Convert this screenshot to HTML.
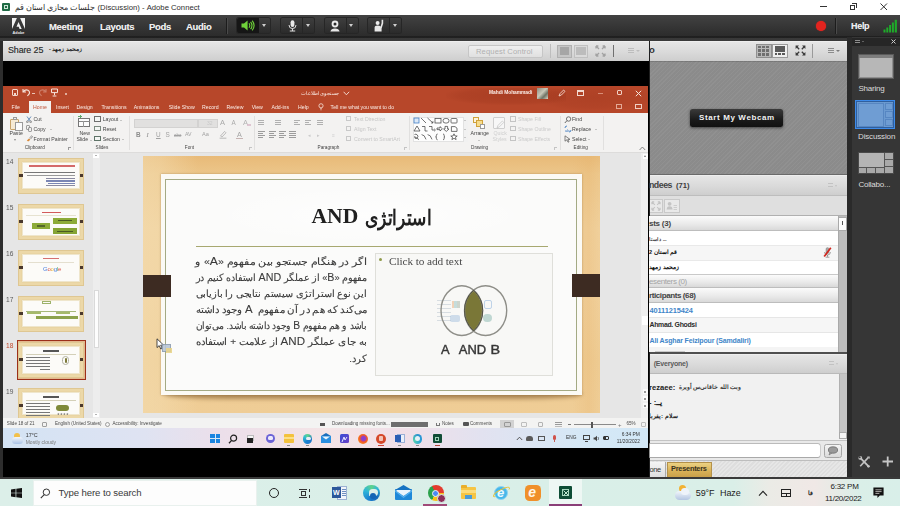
<!DOCTYPE html>
<html>
<head>
<meta charset="utf-8">
<title>Adobe Connect</title>
<style>
*{box-sizing:border-box;margin:0;padding:0}
html,body{width:900px;height:506px;overflow:hidden;background:#2e2e2e;font-family:"Liberation Sans",sans-serif;}
.a{position:absolute}
.t{position:absolute;white-space:nowrap;line-height:1}
#root{position:relative;width:900px;height:506px;overflow:hidden;background:#2d2d2d}
/* title bar */
#titlebar{left:0;top:0;width:900px;height:15px;background:#fff}
/* menu */
#menubar{left:0;top:15px;width:900px;height:21px;background:linear-gradient(#424242,#303030 80%,#2c2c2c)}
#menugap{left:0;top:36px;width:900px;height:5px;background:linear-gradient(#1f1f1f 0,#212121 38%,#383838 45%,#3a3a3a 100%)}
.menu{color:#efefef;font-weight:bold;font-size:9.5px;top:21.6px;letter-spacing:-0.3px;text-shadow:0 0 .6px #888}
.mbtn{top:18px;height:15px;background:linear-gradient(#3e3e3e,#2b2b2b);border-radius:2px;box-shadow:0 0 0 1px #262626}
.arr{width:0;height:0;border-left:2.5px solid transparent;border-right:2.5px solid transparent;border-top:3px solid #cfcfcf}
/* pods */
.podhead{background:linear-gradient(#f3f3f3 0,#e5e5e5 7%,#dadada 55%,#cecece 100%);}
/* powerpoint */
.pp{font-size:5.2px;color:#444;filter:blur(.2px)}
.ppw{font-size:5.2px;color:#fbeee8;filter:blur(.2px)}
.ppd{font-size:5.2px;color:#b9b9b9;filter:blur(.3px)}
.sep{width:1px;background:#e1e0df;top:116px;height:34px}
.ic{border:1px solid #8a8a8a;border-radius:1px;opacity:.8}
.ar{direction:rtl;font-size:11px;color:#2f2f2f;width:173px;left:195px;height:16px;line-height:16px;text-align:justify;text-align-last:justify;white-space:nowrap;position:absolute}
.thumb{left:18px;width:66px;height:36px;background:#ecd8a8;border:1px solid #dfc792}
.thumb i{position:absolute;left:3.4px;top:3.4px;right:3.4px;bottom:3.4px;background:#fcfbf8;border:1px solid #efe6cc;box-shadow:0 0 1px #d9c48e}
.thumb b{position:absolute;top:15px;width:3.5px;height:3.2px;background:#4a382c}
.tn{font-size:6.6px;color:#5a5a5a;left:5.5px;filter:blur(.25px)}
.row{left:649px;width:189px;height:15px}
.rt{font-size:7.4px;font-weight:bold;letter-spacing:-.1px}
.ghead{left:649px;width:189px;background:linear-gradient(#fbfbfb,#e9e9e9 60%,#d9d9d9);border-bottom:1px solid #bdbdbd}
.tb{font-size:9px;color:#222}
</style>
</head>
<body>
<div id="root">

<!-- ===== window title bar ===== -->
<div id="titlebar" class="a">
  <div class="a" style="left:2px;top:3px;width:8px;height:8px;background:#1f6b45;border-radius:1px"></div>
  <div class="a" style="left:4px;top:5px;width:4px;height:4px;border:1px solid #cfe6d8"></div>
  <div class="t" style="left:15px;top:4.3px;font-size:7.7px;color:#2e2e2e;letter-spacing:0">جلسات مجازي استان قم (Discussion) - Adobe Connect</div>
  <div class="a" style="left:820px;top:6px;width:7px;height:1px;background:#333"></div>
  <div class="a" style="left:850px;top:5px;width:5px;height:5px;border:1px solid #333"></div>
  <div class="a" style="left:852px;top:3px;width:5px;height:5px;border-top:1px solid #333;border-right:1px solid #333"></div>
  <svg class="a" style="left:880px;top:3px" width="8" height="8"><path d="M0.5 0.5L7 7M7 0.5L0.5 7" stroke="#333" stroke-width="1" fill="none"/></svg>
</div>

<!-- ===== menu bar ===== -->
<div id="menubar" class="a"></div>
<div id="menugap" class="a"></div>
<div id="menuitems">
  <!-- adobe logo -->
  <svg class="a" style="left:11.7px;top:17.8px" width="13" height="16.5" viewBox="0 0 13 16.5">
    <path d="M0 0H4.9L0 11Z M8.1 0H13V11Z M6.5 4L9.7 11H7.6L6.7 8.7H4.5Z" fill="#f1f1f1"/>
    <text x="6.5" y="15.8" font-size="4.3" font-weight="bold" text-anchor="middle" fill="#ededed" font-family="Liberation Sans, sans-serif" textLength="11.8" lengthAdjust="spacingAndGlyphs">Adobe</text>
  </svg>
  <div class="t menu" style="left:49px">Meeting</div>
  <div class="t menu" style="left:100px">Layouts</div>
  <div class="t menu" style="left:149px">Pods</div>
  <div class="t menu" style="left:186px">Audio</div>
  <div class="a" style="left:226px;top:18px;width:1px;height:16px;background:#1c1c1c;box-shadow:1px 0 0 #4a4a4a"></div>
  <!-- speaker -->
  <div class="a mbtn" style="left:237px;width:33px"></div>
  <div class="a" style="left:237px;top:18px;width:22px;height:15px;background:#161616;border-radius:2px 0 0 2px"></div>
  <svg class="a" style="left:241px;top:20px" width="14" height="11" viewBox="0 0 14 11">
    <path d="M0.5 3.6H3L6.6 0.6V10.4L3 7.4H0.5Z" fill="#6fd23a"/>
    <path d="M8 3.2Q9.6 5.5 8 7.8M9.6 1.8Q12.4 5.5 9.6 9.2M11.2 0.6Q15 5.5 11.2 10.4" stroke="#6fd23a" stroke-width="1.1" fill="none"/>
  </svg>
  <div class="a arr" style="left:262px;top:24px"></div>
  <!-- mic -->
  <div class="a mbtn" style="left:281px;width:33px"></div>
  <div class="a" style="left:302px;top:18px;width:1px;height:15px;background:#262626"></div>
  <svg class="a" style="left:287px;top:20px" width="11" height="12" viewBox="0 0 11 12">
    <rect x="3.6" y="0.3" width="3.8" height="6.6" rx="1.9" fill="#e9e9e9"/>
    <path d="M2 5Q2 8.6 5.5 8.6Q9 8.6 9 5" stroke="#ddd" stroke-width="1" fill="none"/>
    <path d="M5.5 8.6V10.6M2.8 11H8.2" stroke="#ddd" stroke-width="1.1"/>
  </svg>
  <div class="a arr" style="left:306px;top:24px"></div>
  <!-- webcam -->
  <div class="a mbtn" style="left:325px;width:33px"></div>
  <div class="a" style="left:346px;top:18px;width:1px;height:15px;background:#262626"></div>
  <svg class="a" style="left:329px;top:20px" width="12" height="12" viewBox="0 0 12 12">
    <circle cx="6" cy="4" r="3.4" fill="#ececec"/><circle cx="6" cy="4" r="1.5" fill="#2b2b2b"/>
    <path d="M1.4 11.4Q2 8.4 6 8.4Q10 8.4 10.6 11.4Z" fill="#e6e6e6"/>
  </svg>
  <div class="a arr" style="left:349px;top:24px"></div>
  <!-- raise hand -->
  <div class="a mbtn" style="left:368px;width:33px"></div>
  <div class="a" style="left:389px;top:18px;width:1px;height:15px;background:#262626"></div>
  <svg class="a" style="left:373px;top:19px" width="12" height="13" viewBox="0 0 12 13">
    <circle cx="4.6" cy="4" r="2" fill="#ececec"/>
    <path d="M1.6 12.6V8.6Q1.6 6.4 4.6 6.4Q6.6 6.4 7.6 7.4L8.6 4V0.8H10.2V4.6L8.6 9.4V12.6Z" fill="#e8e8e8"/>
  </svg>
  <div class="a arr" style="left:393px;top:24px"></div>
  <!-- right side -->
  <div class="a" style="left:816.3px;top:21.3px;width:10px;height:10px;border-radius:6px;background:#e2241f;box-shadow:0 0 1px #e2241f"></div>
  <div class="a" style="left:835px;top:18px;width:1px;height:16px;background:#1c1c1c;box-shadow:1px 0 0 #4a4a4a"></div>
  <div class="t menu" style="left:851px;font-size:9px">Help</div>
  <svg class="a" style="left:883px;top:19px" width="15" height="14" viewBox="0 0 15 14">
    <rect x="0.5" y="10.5" width="2" height="3" fill="#1faa2a"/><rect x="3.3" y="8.5" width="2" height="5" fill="#1faa2a"/>
    <rect x="6.1" y="6" width="2" height="7.5" fill="#1faa2a"/><rect x="8.9" y="3.5" width="2" height="10" fill="#1faa2a"/>
    <rect x="11.7" y="0.8" width="2.2" height="12.7" fill="#1faa2a"/>
  </svg>
</div>

<!-- ===== share pod ===== -->
<div id="sharepod">
  <!-- header -->
  <div class="a podhead" style="left:3px;top:41px;width:645.5px;height:20px"></div>
  <div class="t" style="left:8px;top:46.3px;font-size:8.9px;color:#3c3c3c;letter-spacing:-0.1px;text-shadow:0 0 .4px #666">Share 25</div>
  <div class="t" style="left:49px;top:47px;font-size:5.5px;font-weight:bold;color:#222">- زمحمد زمهد</div>
  <div class="a" style="left:467.5px;top:44.5px;width:75.5px;height:13.5px;border:1px solid #c6c6c6;border-radius:2px;background:linear-gradient(#efefef,#e0e0e0)"></div>
  <div class="t" style="left:476px;top:47.8px;font-size:7.6px;color:#b0b0b0;letter-spacing:.12px">Request Control</div>
  <div class="a" style="left:550px;top:44px;width:1px;height:14px;background:#bdbdbd"></div>
  <div class="a" style="left:557px;top:44.5px;width:14.5px;height:13.5px;background:#c6c6c6;border:1px solid #b0b0b0"></div>
  <div class="a" style="left:559.5px;top:46.5px;width:9.5px;height:8px;background:#a6a6a6"></div>
  <div class="a" style="left:573.5px;top:44.5px;width:14.5px;height:13.5px;background:#dadada;border:1px solid #c0c0c0"></div>
  <div class="a" style="left:576px;top:46.5px;width:9.5px;height:8px;background:#bcbcbc"></div>
  <svg class="a" style="left:595px;top:45px" width="11" height="12" viewBox="0 0 11 12"><path d="M1 1L4 4M10 1L7 4M1 11L4 8M10 11L7 8M1 1H3.4M1 1V3.4M10 1H7.6M10 1V3.4M1 11H3.4M1 11V8.6M10 11H7.6M10 11V8.6" stroke="#a2a2a2" stroke-width="1.3" fill="none"/></svg>
  <div class="a" style="left:613px;top:45px;width:1.2px;height:12px;background:#707070"></div>
  <div class="a" style="left:628px;top:48px;width:6px;height:5px;border-top:1px solid #bdbdbd;border-bottom:1px solid #bdbdbd"></div>
  <div class="a" style="left:628px;top:50px;width:6px;height:1px;background:#bdbdbd"></div>
  <div class="a arr" style="left:636px;top:50px;border-top-color:#bdbdbd;border-left-width:2px;border-right-width:2px;border-top-width:2.5px"></div>
  <!-- black -->
  <div class="a" style="left:3px;top:61px;width:645.5px;height:416px;background:#000"></div>
  <div id="ppt" style="position:absolute;left:0;top:0;width:648.4px;height:448px;overflow:hidden;filter:blur(.35px)">
<div class="a" style="left:3px;top:86px;width:645.5px;height:27px;background:#b7472a"></div>
<div class="a" style="left:29px;top:101px;width:22px;height:12px;background:#f3f2f1"></div>
<div class="a" style="left:446px;top:88px;width:120px;height:17px;background:radial-gradient(ellipse at 55% 45%,rgba(120,30,10,.22),rgba(120,30,10,.12) 55%,rgba(120,30,10,0) 75%)"></div><div class="a" style="left:540px;top:86px;width:108px;height:24px;background:radial-gradient(ellipse at 50% 50%,rgba(120,30,10,.14),rgba(120,30,10,.08) 55%,rgba(120,30,10,0) 78%)"></div>
<div class="a" style="left:12px;top:89px;width:6px;height:7px;border:1px solid #f3d9cf;border-radius:1px;filter:blur(.3px)"></div>
<div class="a" style="left:14px;top:93px;width:2px;height:2px;background:#f3d9cf"></div>
<svg class="a" style="left:22px;top:88px;filter:blur(.3px)" width="9" height="9" viewBox="0 0 9 9"><path d="M1 1V4H4M1.3 3.8Q3 1 6 2.2Q8.4 3.6 7 6.2L5.4 8" stroke="#f6e3db" stroke-width="1.1" fill="none"/></svg>
<div class="a" style="left:32px;top:93px;width:3px;height:1px;background:#e9c2b4"></div>
<svg class="a" style="left:38px;top:88px;opacity:.35;filter:blur(.3px)" width="9" height="9" viewBox="0 0 9 9"><path d="M8 1V4H5M7.7 3.8Q6 1 3 2.2Q.6 3.6 2 6.2L3.6 8" stroke="#f6e3db" stroke-width="1.1" fill="none"/></svg>
<svg class="a" style="left:50px;top:88px;filter:blur(.3px)" width="9" height="9" viewBox="0 0 9 9"><path d="M1.5 1H7.5V4.6H1.5ZM4.5 4.6V7.2M2.6 8H6.4" stroke="#f6e3db" stroke-width="1" fill="none"/></svg>
<div class="a" style="left:65px;top:93px;width:2px;height:2px;background:#efcfc3;border-radius:1px"></div>
<div class="t ppw" style="left:301px;top:90.8px;font-size:5.4px;direction:rtl">جستجوی اطلاعات</div>
<svg class="a" style="left:343px;top:91px" width="7" height="5"><path d="M.6 .8L3.4 3.8L6.2 .8" stroke="#f6e3db" stroke-width=".9" fill="none"/></svg>
<div class="t ppw" style="left:489px;top:91.2px;font-size:4.9px;font-weight:bold;letter-spacing:-.05px">Mahdi Mohammadi</div>
<div class="a" style="left:537px;top:87.5px;width:10.5px;height:11px;background:linear-gradient(135deg,#8d8d80,#c9c7b8 45%,#6f7366 70%,#d8d4c6);filter:blur(.4px)"></div>
<svg class="a" style="left:558px;top:89px;filter:blur(.3px)" width="8" height="8"><path d="M1 7L2 4.6L5.6 1L7 2.4L3.4 6Z" stroke="#f3d9cf" stroke-width=".9" fill="none"/></svg>
<div class="a" style="left:577px;top:90px;width:7px;height:6px;border:1px solid #f3d9cf;border-top-width:2px;filter:blur(.3px)"></div>
<div class="a" style="left:598px;top:93px;width:5px;height:1px;background:#d98e78"></div>
<div class="a" style="left:617px;top:90px;width:5px;height:5px;border:1px solid #f0cfc3;border-radius:1px;filter:blur(.3px)"></div>
<svg class="a" style="left:635px;top:89.5px;filter:blur(.3px)" width="7" height="7"><path d="M.8 .8L6.2 6.2M6.2 .8L.8 6.2" stroke="#f6e3db" stroke-width="1" fill="none"/></svg>
<div class="a" style="left:616px;top:104px;width:6px;height:5px;border:1px solid #e3a996;filter:blur(.3px)"></div>
<div class="a" style="left:635px;top:104px;width:7px;height:5px;border:1px solid #f0cfc3;filter:blur(.3px)"></div>
<div class="t ppw" style="left:11.5px;top:104.5px;">File</div>
<div class="t ppw" style="left:56px;top:104.5px;">Insert</div>
<div class="t ppw" style="left:76.6px;top:104.5px;">Design</div>
<div class="t ppw" style="left:101.4px;top:104.5px;">Transitions</div>
<div class="t ppw" style="left:133.8px;top:104.5px;">Animations</div>
<div class="t ppw" style="left:168.8px;top:104.5px;">Slide Show</div>
<div class="t ppw" style="left:202px;top:104.5px;">Record</div>
<div class="t ppw" style="left:226.4px;top:104.5px;">Review</div>
<div class="t ppw" style="left:251.7px;top:104.5px;">View</div>
<div class="t ppw" style="left:271.5px;top:104.5px;">Add-ins</div>
<div class="t ppw" style="left:298px;top:104.5px;">Help</div>
<div class="t pp" style="left:33px;top:104.5px;color:#c2553a">Home</div>
<svg class="a" style="left:318px;top:103px;filter:blur(.3px)" width="6" height="8"><circle cx="3" cy="2.8" r="2.1" stroke="#f6e3db" stroke-width=".8" fill="none"/><path d="M2.2 5.6H3.8M2.4 6.8H3.6" stroke="#f6e3db" stroke-width=".7"/></svg>
<div class="t ppw" style="left:330.6px;top:104.5px;font-size:5.15px">Tell me what you want to do</div>
<div class="a" style="left:3px;top:113px;width:645.5px;height:39.5px;background:#f3f2f1;border-bottom:1px solid #dddcdb"></div>
<div class="a" style="left:10px;top:119px;width:9px;height:11px;border:1px solid #c9a46a;border-radius:1px;background:#f6ead4;filter:blur(.3px)"></div>
<div class="a" style="left:12.5px;top:117px;width:4px;height:3px;border:1px solid #9a9a9a;background:#eee"></div>
<div class="a" style="left:15px;top:122px;width:8px;height:9px;border:1px solid #9a9a9a;background:#fbfbfb;filter:blur(.3px)"></div>
<div class="t pp" style="left:9.5px;top:131px;">Paste</div>
<div class="a arr" style="left:13.5px;top:139px;border-top-color:#8a8a8a;border-left-width:1.5px;border-right-width:1.5px;border-top-width:2px"></div>
<svg class="a" style="left:26px;top:116px;filter:blur(.3px)" width="6" height="7"><path d="M1 .5L4.2 5M5 .5L1.8 5" stroke="#4a78b0" stroke-width=".8"/><circle cx="1.4" cy="5.8" r=".9" fill="none" stroke="#555" stroke-width=".6"/><circle cx="4.6" cy="5.8" r=".9" fill="none" stroke="#555" stroke-width=".6"/></svg>
<div class="t pp" style="left:33.5px;top:117px;">Cut</div>
<div class="a ic" style="left:26px;top:125px;width:4px;height:5px"></div><div class="a ic" style="left:28px;top:127px;width:4px;height:5px;background:#f3f2f1"></div>
<div class="t pp" style="left:33.5px;top:126.5px;">Copy</div>
<div class="a arr" style="left:50px;top:129px;border-top-color:#9a9a9a;border-left-width:1.2px;border-right-width:1.2px;border-top-width:1.6px"></div>
<svg class="a" style="left:26px;top:135px;filter:blur(.3px)" width="7" height="7"><path d="M.8 5.6L3 3.4L4.4 4.8L2.2 6.6Z" fill="#d98a3a"/><path d="M3.4 3L5.8 .8L6.6 1.6L4.6 4" stroke="#777" stroke-width=".8" fill="none"/></svg>
<div class="t pp" style="left:33.5px;top:136.5px;">Format Painter</div>
<div class="t pp" style="left:24.7px;top:146px;font-size:4.7px">Clipboard</div>
<div class="a" style="left:67.5px;top:146.5px;width:3px;height:3px;border-left:1px solid #9a9a9a;border-top:1px solid #9a9a9a"></div>
<div class="a sep" style="left:72.5px"></div>
<div class="a" style="left:78.2px;top:117.6px;width:11.6px;height:9.6px;border:1px solid #767676;border-top-width:1.6px;background:#fdfdfd"></div>
<div class="a" style="left:78.5px;top:121px;width:11px;height:1px;background:#888"></div><div class="a" style="left:83px;top:121px;width:1px;height:6px;background:#999"></div>
<div class="a" style="left:79.6px;top:114.6px;width:1px;height:3.4px;background:#5fa86a"></div><div class="a" style="left:78.4px;top:115.8px;width:3.4px;height:1px;background:#5fa86a"></div>
<div class="t pp" style="left:79.5px;top:131px;">New</div>
<div class="t pp" style="left:76.5px;top:137px;">Slide</div>
<div class="a arr" style="left:89.5px;top:140px;border-top-color:#9a9a9a;border-left-width:1.2px;border-right-width:1.2px;border-top-width:1.6px"></div>
<div class="a" style="left:94.2px;top:116px;width:7px;height:5.6px;border:1px solid #6e6e6e;border-top-width:1.8px;background:#f4f6f4"></div>
<div class="t pp" style="left:102.7px;top:117px;">Layout</div>
<div class="a" style="left:94.2px;top:125.5px;width:7px;height:5.6px;border:1px solid #7d8a80;border-top-width:1.8px;background:#f4f6f4"></div>
<div class="t pp" style="left:102.7px;top:126.5px;">Reset</div>
<div class="a" style="left:94.2px;top:135.5px;width:7px;height:5.6px;border:1px solid #5f7468;border-top-width:1.8px;background:#f4f6f4"></div>
<div class="t pp" style="left:102.7px;top:136.5px;">Section</div>
<div class="a arr" style="left:119.5px;top:119.5px;border-top-color:#9a9a9a;border-left-width:1.2px;border-right-width:1.2px;border-top-width:1.6px"></div>
<div class="a arr" style="left:121.5px;top:139px;border-top-color:#9a9a9a;border-left-width:1.2px;border-right-width:1.2px;border-top-width:1.6px"></div>
<div class="t pp" style="left:95.5px;top:146px;font-size:4.7px">Slides</div>
<div class="a sep" style="left:128.5px"></div>
<div class="a" style="left:133.5px;top:118.5px;width:64px;height:9px;background:#e1e0df;border:1px solid #d3d2d1"></div>
<div class="a" style="left:198px;top:118.5px;width:20px;height:9px;background:#e1e0df;border:1px solid #d3d2d1"></div>
<div class="t ppd" style="left:207px;top:120.5px;font-size:5px;color:#c8c8c8">32</div>
<div class="t ppd" style="left:220px;top:119px;font-size:7.5px;color:#a9a9a9">A</div>
<div class="t ppd" style="left:231.5px;top:120px;font-size:6.3px;color:#a9a9a9">A</div>
<div class="t ppd" style="left:243px;top:119px;font-size:7.5px;color:#b4b4b4">A</div>
<div class="a" style="left:247px;top:124px;width:4px;height:2px;background:#d8b9c9;opacity:.8"></div>
<div class="t ppd" style="left:136px;top:132px;font-size:6.4px;color:#8c8c8c;font-weight:bold">B</div>
<div class="t ppd" style="left:146.5px;top:132px;font-size:6.4px;color:#8c8c8c;font-style:italic;font-family:'Liberation Serif',serif">I</div>
<div class="t ppd" style="left:156px;top:132px;font-size:6.4px;color:#a2a2a2;text-decoration:underline">U</div>
<div class="t ppd" style="left:165.5px;top:132px;font-size:6.4px;color:#a2a2a2;">S</div>
<div class="t ppd" style="left:174px;top:132px;font-size:6.4px;color:#a2a2a2;font-size:4.6px;text-decoration:line-through;top:133.5px">abc</div>
<div class="t ppd" style="left:185px;top:132px;font-size:6.4px;color:#a2a2a2;font-size:5.2px">AV</div>
<div class="t ppd" style="left:202px;top:132px;font-size:6.4px;color:#a2a2a2;font-size:5.6px">Aa</div>
<svg class="a" style="left:219px;top:130px;filter:blur(.3px);opacity:.55" width="9" height="9"><path d="M1.5 6L5.6 1.4L7 2.8L3 7Z" stroke="#777" stroke-width=".8" fill="none"/><path d="M.6 8.2H7.4" stroke="#999" stroke-width="1.2"/></svg>
<div class="t ppd" style="left:237px;top:130.5px;font-size:7.2px;color:#a3a3a3">A</div>
<div class="a" style="left:236px;top:137.6px;width:7px;height:1.3px;background:#b9a3a3;opacity:.8"></div>
<div class="t pp" style="left:184.8px;top:146px;font-size:4.7px">Font</div>
<div class="a" style="left:248.5px;top:146.5px;width:3px;height:3px;border-left:1px solid #c4c4c4;border-top:1px solid #c4c4c4"></div>
<div class="a sep" style="left:253.5px"></div>
<div class="a" style="left:258px;top:120px;width:6px;height:1px;background:#b0b0b0"></div><div class="a" style="left:258px;top:122px;width:6px;height:1px;background:#b0b0b0"></div><div class="a" style="left:258px;top:124px;width:6px;height:1px;background:#b0b0b0"></div>
<div class="a" style="left:275px;top:120px;width:6px;height:1px;background:#b0b0b0"></div><div class="a" style="left:275px;top:122px;width:6px;height:1px;background:#b0b0b0"></div><div class="a" style="left:275px;top:124px;width:6px;height:1px;background:#b0b0b0"></div>
<div class="a" style="left:294px;top:120px;width:6px;height:1px;background:#b0b0b0"></div><div class="a" style="left:294px;top:122px;width:4px;height:1px;background:#b0b0b0"></div><div class="a" style="left:294px;top:124px;width:6px;height:1px;background:#b0b0b0"></div>
<div class="a" style="left:305px;top:120px;width:6px;height:1px;background:#b0b0b0"></div><div class="a" style="left:305px;top:122px;width:4px;height:1px;background:#b0b0b0"></div><div class="a" style="left:305px;top:124px;width:6px;height:1px;background:#b0b0b0"></div>
<div class="a" style="left:317px;top:120px;width:6px;height:1px;background:#b0b0b0"></div><div class="a" style="left:317px;top:122px;width:6px;height:1px;background:#b0b0b0"></div><div class="a" style="left:317px;top:124px;width:6px;height:1px;background:#b0b0b0"></div>
<div class="a" style="left:258px;top:131px;width:7px;height:1px;background:#9c9c9c"></div><div class="a" style="left:258px;top:133px;width:5px;height:1px;background:#9c9c9c"></div><div class="a" style="left:258px;top:135px;width:7px;height:1px;background:#9c9c9c"></div><div class="a" style="left:258px;top:137px;width:5px;height:1px;background:#9c9c9c"></div>
<div class="a" style="left:269px;top:131px;width:7px;height:1px;background:#9c9c9c"></div><div class="a" style="left:269px;top:133px;width:5px;height:1px;background:#9c9c9c"></div><div class="a" style="left:269px;top:135px;width:7px;height:1px;background:#9c9c9c"></div><div class="a" style="left:269px;top:137px;width:5px;height:1px;background:#9c9c9c"></div>
<div class="a" style="left:279px;top:131px;width:7px;height:1px;background:#9c9c9c"></div><div class="a" style="left:279px;top:133px;width:5px;height:1px;background:#9c9c9c"></div><div class="a" style="left:279px;top:135px;width:7px;height:1px;background:#9c9c9c"></div><div class="a" style="left:279px;top:137px;width:5px;height:1px;background:#9c9c9c"></div>
<div class="a" style="left:289px;top:131px;width:7px;height:1px;background:#9c9c9c"></div><div class="a" style="left:289px;top:133px;width:7px;height:1px;background:#9c9c9c"></div><div class="a" style="left:289px;top:135px;width:7px;height:1px;background:#9c9c9c"></div><div class="a" style="left:289px;top:137px;width:7px;height:1px;background:#9c9c9c"></div>
<div class="t ppd" style="left:308px;top:132.5px;font-size:5px;color:#c9c9c9">◂</div>
<div class="t ppd" style="left:317px;top:132.5px;font-size:5px;color:#c9c9c9">▸</div>
<div class="t ppd" style="left:332px;top:132.5px;font-size:5px;color:#d0d0d0">≡</div>
<div class="a" style="left:346px;top:116px;width:5px;height:5px;border:1px solid #c9c9c9;filter:blur(.3px)"></div>
<div class="t ppd" style="left:354px;top:117px;color:#c6c6c6">Text Direction</div>
<div class="a" style="left:346px;top:125.5px;width:5px;height:5px;border:1px solid #c9c9c9;filter:blur(.3px)"></div>
<div class="t ppd" style="left:354px;top:126.5px;color:#c6c6c6">Align Text</div>
<div class="a" style="left:346px;top:135.5px;width:5px;height:5px;border:1px solid #c9c9c9;filter:blur(.3px)"></div>
<div class="t ppd" style="left:354px;top:136.5px;color:#c6c6c6">Convert to SmartArt</div>
<div class="t pp" style="left:317.5px;top:146px;font-size:4.7px">Paragraph</div>
<div class="a" style="left:403.5px;top:146.5px;width:3px;height:3px;border-left:1px solid #c4c4c4;border-top:1px solid #c4c4c4"></div>
<div class="a sep" style="left:409px"></div>
<div class="a" style="left:412.5px;top:116.5px;width:55px;height:25px;background:#fdfdfd;border:1px solid #e2e2e2"></div>
<div class="a" style="left:462.5px;top:116.5px;width:5px;height:25px;background:#f1f1f1;border-left:1px solid #e2e2e2"></div>
<svg class="a" style="left:413px;top:117px;filter:blur(.35px)" width="50" height="24" viewBox="0 0 50 24"><g stroke="#444" stroke-width=".75" fill="none"><rect x="1" y="1" width="5" height="5" stroke="#3a78c2" fill="#dbe8f7"/><path d="M8 1L13 6M14.5 1L20 6M19.9 6V4.2M19.9 6H18.2"/><rect x="22" y="1.5" width="6" height="4.5"/><rect x="30" y="1.5" width="6" height="4.5" rx="2.2"/><rect x="38" y="1.5" width="6" height="4.5" rx=".8"/><path d="M1 14L4 9L7 14ZM9 9.5H12V14H14.5M16 9.5H19V13H21M21 14.3L22.4 13L21 11.7M24 11H27V9.6L29.4 11.8L27 14V12.6H24ZM32 9.4H34.6V12H36L33.3 14.4L30.6 12H32ZM38.4 9.6H42L44 11.2V14.4H38.4Z"/><path d="M1.5 17.5Q3 16.5 4.4 18Q6 20 3.6 21.4Q1.4 22 1.6 19.6L6 22.6M8.6 17.6Q11.6 17.6 13 22.4M14.6 17.6Q17.6 17.6 19 22.4M24.6 17Q23.4 17 23.4 18.4V19.2Q23.4 19.9 22.6 19.9Q23.4 19.9 23.4 20.6V21.4Q23.4 22.8 24.6 22.8M30 17Q31.2 17 31.2 18.4V19.2Q31.2 19.9 32 19.9Q31.2 19.9 31.2 20.6V21.4Q31.2 22.8 30 22.8M41 16.8L42 19H44.2L42.5 20.4L43.1 22.6L41 21.3L38.9 22.6L39.5 20.4L37.8 19H40Z"/></g></svg>
<div class="a arr" style="left:463.7px;top:120px;border-top-color:#9d9d9d;border-left-width:1.2px;border-right-width:1.2px;border-top-width:1.5px"></div>
<div class="a arr" style="left:463.7px;top:128.5px;border-top-color:#9d9d9d;border-left-width:1.2px;border-right-width:1.2px;border-top-width:1.5px"></div>
<div class="a arr" style="left:463.7px;top:137px;border-top-color:#9d9d9d;border-left-width:1.2px;border-right-width:1.2px;border-top-width:1.5px"></div>
<div class="a" style="left:473px;top:117px;width:6px;height:6px;border:1px solid #d0a23a;background:#fbf3dc;filter:blur(.3px)"></div>
<div class="a" style="left:476px;top:120px;width:7px;height:7px;border:1px solid #d0a23a;background:#f7dc8c;filter:blur(.3px)"></div>
<div class="a" style="left:480px;top:124px;width:5px;height:5px;border:1px solid #9a9a9a;background:#fff;filter:blur(.3px)"></div>
<div class="t pp" style="left:470.5px;top:131px;">Arrange</div>
<div class="a arr" style="left:478px;top:139.5px;border-top-color:#9a9a9a;border-left-width:1.2px;border-right-width:1.2px;border-top-width:1.6px"></div>
<div class="a" style="left:492.5px;top:117px;width:12px;height:12px;border:1px solid #cfcfcf;border-radius:1px;background:#f7f7f7;filter:blur(.3px)"></div>
<svg class="a" style="left:496px;top:120px;opacity:.5" width="9" height="9"><path d="M1 8L2 5.4L6.4 1L7.8 2.4L3.4 6.8Z" stroke="#999" stroke-width=".8" fill="none"/></svg>
<div class="t ppd" style="left:493.5px;top:131px;color:#cfcfcf">Quick</div>
<div class="t ppd" style="left:492.5px;top:137px;color:#cfcfcf">Styles</div>
<div class="a" style="left:510px;top:116px;width:5.5px;height:5.5px;border:1px solid #c4c4c4;filter:blur(.3px)"></div>
<div class="t ppd" style="left:518px;top:117px;color:#cacaca">Shape Fill</div>
<div class="a" style="left:510px;top:125.5px;width:5.5px;height:5.5px;border:1px solid #c4c4c4;filter:blur(.3px)"></div>
<div class="t ppd" style="left:518px;top:126.5px;color:#cacaca">Shape Outline</div>
<div class="a" style="left:510px;top:135.5px;width:5.5px;height:5.5px;border:1px solid #c4c4c4;filter:blur(.3px)"></div>
<div class="t ppd" style="left:518px;top:136.5px;color:#cacaca">Shape Effects</div>
<div class="t pp" style="left:471px;top:146px;font-size:4.7px">Drawing</div>
<div class="a" style="left:554px;top:146.5px;width:3px;height:3px;border-left:1px solid #c4c4c4;border-top:1px solid #c4c4c4"></div>
<div class="a sep" style="left:559.5px"></div>
<svg class="a" style="left:564px;top:115.5px;filter:blur(.3px)" width="8" height="8"><circle cx="4.6" cy="3" r="2.2" stroke="#555" stroke-width=".8" fill="none"/><path d="M3 4.6L.8 7" stroke="#555" stroke-width=".9"/></svg>
<div class="t pp" style="left:572px;top:117px;color:#444">Find</div>
<svg class="a" style="left:563.5px;top:125px;filter:blur(.3px)" width="8" height="8"><path d="M1 3Q1 1 3 1M5 7Q7 7 7 5" stroke="#3b78c0" stroke-width=".9" fill="none"/><text x="1" y="7.4" font-size="4" fill="#3b78c0" font-family="Liberation Sans, sans-serif">ab</text></svg>
<div class="t pp" style="left:572px;top:126.5px;color:#444">Replace</div>
<div class="a arr" style="left:595px;top:129px;border-top-color:#9a9a9a;border-left-width:1.2px;border-right-width:1.2px;border-top-width:1.6px"></div>
<svg class="a" style="left:564px;top:135px;filter:blur(.3px)" width="7" height="8"><path d="M1 .8V6.2L2.8 4.8L4 7.2L5 6.8L3.8 4.4H6Z" stroke="#555" stroke-width=".7" fill="none"/></svg>
<div class="t pp" style="left:572px;top:136.5px;color:#444">Select</div>
<div class="a arr" style="left:588px;top:139px;border-top-color:#9a9a9a;border-left-width:1.2px;border-right-width:1.2px;border-top-width:1.6px"></div>
<div class="t pp" style="left:573.6px;top:146px;font-size:4.7px">Editing</div>
<div class="a sep" style="left:602.5px"></div>
<svg class="a" style="left:639px;top:146px" width="7" height="5"><path d="M.6 4L3.4 1L6.2 4" stroke="#777" stroke-width=".9" fill="none"/></svg>
<div id="ppbody">
<div class="a" style="left:3px;top:153px;width:645.5px;height:267px;background:#e6e6e6"></div>
<div class="a" style="left:93px;top:153px;width:6.5px;height:266px;background:#ededed"></div>
<div class="a" style="left:93.4px;top:153.8px;width:5.4px;height:4.6px;background:#fff"></div><div class="a arr" style="left:94.6px;top:155.2px;border-top:none;border-bottom:1.8px solid #666;border-left-width:1.5px;border-right-width:1.5px"></div>
<div class="a" style="left:94px;top:290px;width:4.7px;height:58px;background:#fdfdfd;border:1px solid #d9d9d9"></div>
<div class="a" style="left:93.4px;top:412.6px;width:5.4px;height:4.6px;background:#fff"></div><div class="a arr" style="left:94.6px;top:414.2px;border-top:1.8px solid #666;border-left-width:1.5px;border-right-width:1.5px"></div>
<div class="a thumb" style="top:157.5px;height:36px"><i></i><b style="left:0"></b><b style="right:0"></b></div>
<div class="t tn" style="left:6px;top:158.5px;">14</div>
<div class="a thumb" style="top:204px;height:36px"><i></i><b style="left:0"></b><b style="right:0"></b></div>
<div class="t tn" style="left:6px;top:205px;">15</div>
<div class="a thumb" style="top:250px;height:36px"><i></i><b style="left:0"></b><b style="right:0"></b></div>
<div class="t tn" style="left:6px;top:251px;">16</div>
<div class="a thumb" style="top:295.5px;height:36px"><i></i><b style="left:0"></b><b style="right:0"></b></div>
<div class="t tn" style="left:6px;top:296.5px;">17</div>
<div class="a" style="left:16.5px;top:340px;width:69.5px;height:40px;border:1.4px solid #9c3019;background:#e2b78e"></div>
<div class="a thumb" style="top:342px;height:36px"><i></i><b style="left:0"></b><b style="right:0"></b></div>
<div class="t tn" style="left:6px;top:343px;color:#c24a2c">18</div>
<div class="a thumb" style="top:388px;height:31px"><i></i><b style="left:0"></b><b style="right:0"></b></div>
<div class="t tn" style="left:6px;top:389px;">19</div>
<div class="a" style="left:28.5px;top:165px;width:46px;height:1.8px;background:#d46a6a;filter:blur(.4px)"></div>
<div class="a" style="left:24px;top:172px;width:51px;height:1.2px;background:#777;filter:blur(.35px)"></div>
<div class="a" style="left:27px;top:174.6px;width:48px;height:1.2px;background:#999;filter:blur(.35px)"></div>
<div class="a" style="left:46px;top:178px;width:29px;height:1.2px;background:#8a8aa0;filter:blur(.35px)"></div>
<div class="a" style="left:46px;top:180.4px;width:29px;height:1.2px;background:#7a86b4;filter:blur(.35px)"></div>
<div class="a" style="left:48px;top:182.8px;width:27px;height:1.2px;background:#7a86b4;filter:blur(.35px)"></div>
<div class="a" style="left:46px;top:185.2px;width:29px;height:1.2px;background:#8a8aa0;filter:blur(.35px)"></div>
<div class="a" style="left:41.8px;top:211.6px;width:19.6px;height:1.8px;background:#d25a5a;filter:blur(.4px)"></div><div class="a" style="left:26px;top:215.3px;width:50px;height:1px;background:#e6e2d0"></div>
<div class="a" style="left:53.4px;top:217.5px;width:23.5px;height:6.5px;background:#8dab38;filter:blur(.3px)"></div><div class="a" style="left:58px;top:220px;width:14px;height:1.4px;background:#4a5a22;filter:blur(.4px)"></div>
<div class="a" style="left:31.7px;top:223.2px;width:18px;height:5.7px;background:#8dab38;filter:blur(.3px)"></div><div class="a" style="left:37px;top:225.4px;width:8px;height:1.3px;background:#55662a;filter:blur(.4px)"></div>
<div class="a" style="left:53.4px;top:228.2px;width:23.5px;height:6px;background:#86a434;filter:blur(.3px)"></div><div class="a" style="left:57px;top:230.6px;width:16px;height:1.4px;background:#4a5a22;filter:blur(.4px)"></div>
<div class="a" style="left:43px;top:257.5px;width:16px;height:1.5px;background:#d67070;filter:blur(.3px)"></div>
<div class="a" style="left:28px;top:261.5px;width:46px;height:1px;background:#e4dfcf"></div>
<div class="t" style="left:43px;top:266px;font-size:6px;letter-spacing:-.2px;filter:blur(.3px)"><span style="color:#4a7fe0">G</span><span style="color:#d9534a">o</span><span style="color:#e6b43a">o</span><span style="color:#4a7fe0">g</span><span style="color:#4aa860">l</span><span style="color:#d9534a">e</span></div>
<div class="a" style="left:42px;top:300.5px;width:9px;height:3px;border:1px solid #9db26a;filter:blur(.3px)"></div>
<div class="a" style="left:26px;top:311px;width:50px;height:1px;background:#a7b87a"></div>
<div class="a" style="left:27px;top:312px;width:14px;height:2.2px;background:#a6ba6c;filter:blur(.3px)"></div><div class="a" style="left:56px;top:312px;width:14px;height:2.2px;background:#a6ba6c;filter:blur(.3px)"></div>
<div class="a" style="left:36px;top:316px;width:42px;height:3px;background:#8ca24c;filter:blur(.4px)"></div>
<div class="a" style="left:43px;top:350px;width:16px;height:1.8px;background:#555;filter:blur(.3px)"></div>
<div class="a" style="left:26px;top:353.5px;width:50px;height:1px;background:#d4d0b8"></div>
<div class="a" style="left:26px;top:356.5px;width:24px;height:1.3px;background:#777;filter:blur(.3px)"></div>
<div class="a" style="left:26px;top:359.5px;width:24px;height:1.3px;background:#777;filter:blur(.3px)"></div>
<div class="a" style="left:26px;top:362.5px;width:24px;height:1.3px;background:#777;filter:blur(.3px)"></div>
<div class="a" style="left:26px;top:365.5px;width:24px;height:1.3px;background:#777;filter:blur(.3px)"></div>
<div class="a" style="left:40px;top:368.5px;width:10px;height:1.3px;background:#777;filter:blur(.3px)"></div>
<div class="a" style="left:62px;top:356px;width:7px;height:9px;border:1px solid #b0b0a0;border-radius:4px;filter:blur(.3px)"></div><div class="a" style="left:64.5px;top:358px;width:2.5px;height:5px;background:#7d7a3a;border-radius:2px"></div>
<div class="a" style="left:43px;top:396px;width:16px;height:1.8px;background:#555;filter:blur(.3px)"></div>
<div class="a" style="left:26px;top:399.5px;width:50px;height:1px;background:#d4d0b8"></div>
<div class="a" style="left:26px;top:402.5px;width:24px;height:1.3px;background:#777;filter:blur(.3px)"></div>
<div class="a" style="left:26px;top:405.5px;width:24px;height:1.3px;background:#777;filter:blur(.3px)"></div>
<div class="a" style="left:26px;top:408.5px;width:24px;height:1.3px;background:#777;filter:blur(.3px)"></div>
<div class="a" style="left:26px;top:411.5px;width:24px;height:1.3px;background:#777;filter:blur(.3px)"></div>
<div class="a" style="left:26px;top:414.5px;width:24px;height:1.3px;background:#777;filter:blur(.3px)"></div>
<div class="a" style="left:56px;top:405px;width:13px;height:6px;background:#7f8a3a;border-radius:3px;filter:blur(.3px)"></div>
<div class="t " style="left:57px;top:413px;font-size:3.4px;color:#555">★★★★</div>
<div id="slide">
<div class="a" style="left:143px;top:156.3px;width:457px;height:256.5px;background:linear-gradient(180deg,#e8ba78 0%,#ecc68a 7%,#f0d09c 28%,#f0cf9a 55%,#eecb92 80%,#efcd96 100%)"></div>
<div class="a" style="left:143px;top:156.3px;width:457px;height:256.5px;background:linear-gradient(90deg,rgba(244,222,178,.55) 0%,rgba(244,222,178,.45) 4%,rgba(255,255,255,0) 12%,rgba(255,255,255,0) 94%,rgba(230,176,104,.22) 97.5%,rgba(240,208,150,.1) 100%)"></div>
<div class="a" style="left:164px;top:389px;width:418px;height:10px;background:rgba(110,72,25,.5);filter:blur(2px);border-radius:30%/100%"></div>
<div class="a" style="left:161.3px;top:174.4px;width:420.4px;height:220.4px;background:#fbfaf5;box-shadow:0 0 2px rgba(130,90,40,.5)"></div>
<div class="a" style="left:164.8px;top:178.6px;width:412.5px;height:212px;background:#fbfbfa;border:1px solid #a4aa84"></div>
<div class="a" style="left:200px;top:185px;width:340px;height:60px;background:radial-gradient(ellipse at center,rgba(255,255,255,.7),rgba(255,255,255,0) 70%)"></div>
<div class="a" style="left:143px;top:274.5px;width:28px;height:22px;background:#3d2b22"></div>
<div class="a" style="left:571.7px;top:274.2px;width:28.5px;height:22.5px;background:#3d2b22"></div>
<div class="a" style="left:196px;top:246.3px;width:352px;height:1.2px;background:#a7a870"></div>
<div class="a" style="left:374.5px;top:252.5px;width:178px;height:123.5px;background:#f8f8f6;border:1px solid #dfdfda"></div>
<div class="a" style="left:379.4px;top:258.4px;width:3px;height:3px;border-radius:2px;background:#8f9a4a"></div>
<div class="t" style="left:389px;top:255.5px;font-family:'Liberation Serif',serif;font-size:11.3px;color:#4a4a4a;letter-spacing:-.1px">Click to add text</div>
<div class="a" style="left:437px;top:300px;width:14px;height:22px;opacity:.35;background:repeating-linear-gradient(#9ab 0 1px,transparent 1px 4px)"></div>
<div class="a" style="left:452px;top:301px;width:8px;height:7px;opacity:.45;background:linear-gradient(90deg,#e9a36a 0 30%,#8bb 30% 60%,#9a9 60%)"></div>
<div class="a" style="left:450px;top:315px;width:10px;height:7px;opacity:.4;background:#8fb1d9;border-radius:2px"></div>
<div class="a" style="left:484px;top:300px;width:8px;height:9px;opacity:.45;border:1px solid #7aa6d6;border-radius:2px"></div>
<div class="a" style="left:483px;top:314px;width:9px;height:8px;opacity:.45;background:#7ab0a6;border-radius:4px"></div>
<svg class="a" style="left:436px;top:282px" width="76" height="58" viewBox="436 282 76 58"><defs><clipPath id="cl"><ellipse cx="461.8" cy="310.6" rx="20.8" ry="24.9"/></clipPath></defs><ellipse cx="485.6" cy="310.6" rx="21.1" ry="24.9" fill="#7a7737" clip-path="url(#cl)"/><ellipse cx="461.8" cy="310.6" rx="20.8" ry="24.9" fill="none" stroke="#8e8e88" stroke-width="1.4"/><ellipse cx="485.6" cy="310.6" rx="21.1" ry="24.9" fill="none" stroke="#8e8e88" stroke-width="1.4"/><path d="M473.6 290.2Q464.3 299 464.5 310.6Q464.3 322 473.6 331Q482.9 322 482.7 310.6Q482.9 299 473.6 290.2Z" fill="none" stroke="#4a4a3a" stroke-width=".9"/></svg>
<svg class="a" style="left:436px;top:340px" width="76" height="20" viewBox="436 340 76 20" font-family="Liberation Sans, sans-serif" font-size="12.6" fill="#363636" stroke="#363636" stroke-width=".4"><text x="441" y="354.3" textLength="8.6" lengthAdjust="spacingAndGlyphs">A</text><text x="458.8" y="354.3" textLength="27.4" lengthAdjust="spacingAndGlyphs">AND</text><text x="490.6" y="354.3" textLength="9.6" lengthAdjust="spacingAndGlyphs">B</text></svg>
<svg class="a" style="left:143px;top:156px" width="457" height="257" viewBox="143 156 457 257" font-family="Liberation Sans, sans-serif">
<text x="311.5" y="223" font-family="Liberation Serif, serif" font-weight="bold" font-size="21.4" fill="#202020" textLength="46.7" lengthAdjust="spacingAndGlyphs">AND</text>
<text x="431.5" y="225" direction="rtl" font-family="Liberation Serif, serif" font-weight="bold" font-size="21" fill="#202020" textLength="66.7" lengthAdjust="spacingAndGlyphs">استراتژی</text>
<g font-size="9.7" fill="#3c3c3c" direction="rtl" stroke="#3c3c3c" stroke-width=".12">
<text x="367" y="264.8" textLength="171.5" lengthAdjust="spacingAndGlyphs">اگر در هنگام جستجو بین مفهوم «<tspan font-size="11.2" stroke-width=".1">A</tspan>» و</text>
<text x="367" y="280.9" textLength="171.5" lengthAdjust="spacingAndGlyphs">مفهوم «<tspan font-size="11.2" stroke-width=".1">B</tspan>» از عملگر <tspan font-size="11.2" stroke-width=".1">AND</tspan> استفاده کنیم در</text>
<text x="367" y="296.9" textLength="171.5" lengthAdjust="spacingAndGlyphs">این نوع استراتژی سیستم نتایجی را بازیابی</text>
<text x="367" y="313.0" textLength="171.5" lengthAdjust="spacingAndGlyphs">می‌کند که هم در آن مفهوم  <tspan font-size="11.2" stroke-width=".1">A</tspan> وجود داشته</text>
<text x="367" y="329.0" textLength="171.5" lengthAdjust="spacingAndGlyphs">باشد و هم مفهوم <tspan font-size="11.2" stroke-width=".1">B</tspan> وجود داشته باشد. می‌توان</text>
<text x="367" y="345.1" textLength="171.5" lengthAdjust="spacingAndGlyphs">به جای عملگر <tspan font-size="11.2" stroke-width=".1">AND</tspan> از علامت + استفاده</text>
<text x="367" y="361.9">کرد.</text>
</g></svg>
<svg class="a" style="left:155.5px;top:337.5px" width="9" height="12"><path d="M1 .8V9.6L3.2 7.6L4.8 11L6.2 10.4L4.7 7.1H7.6Z" fill="#fff" stroke="#222" stroke-width=".8"/></svg>
<div class="a" style="left:161.5px;top:344px;width:9px;height:8px;background:#b9c6d6;border:1px solid #8d9db0;opacity:.9"></div>
<div class="a" style="left:166px;top:348px;width:6px;height:5px;background:#e8d48a;opacity:.9"></div>
</div>
<div class="a" style="left:641.3px;top:153px;width:7.2px;height:265px;background:#efefef"></div>
<div class="a" style="left:642.5px;top:153.5px;width:5.5px;height:5px;background:#fff"></div><div class="a arr" style="left:644px;top:155px;border-top:none;border-bottom:2px solid #777;border-left-width:1.5px;border-right-width:1.5px"></div>
<div class="a" style="left:641.8px;top:315.5px;width:6.4px;height:9px;background:#fff"></div>
<div class="a" style="left:642.5px;top:389px;width:5.5px;height:5px;background:#fafafa"></div><div class="a" style="left:644.3px;top:390.5px;width:2px;height:2px;background:#777;border-radius:1px"></div>
<div class="a" style="left:642.5px;top:396.3px;width:5.5px;height:5px;background:#fafafa"></div><div class="a" style="left:644.3px;top:397.8px;width:2px;height:2px;background:#777;border-radius:1px"></div>
<div class="a" style="left:642.5px;top:403px;width:5.5px;height:5px;background:#fafafa"></div><div class="a" style="left:644.3px;top:404.5px;width:2px;height:2px;background:#777;border-radius:1px"></div>
<div class="a" style="left:3px;top:417.5px;width:645.5px;height:11px;background:#f3f3f2"></div>
<div class="t pp" style="left:6.8px;top:422.2px;font-size:4.55px;color:#4a4a4a">Slide 18 of 21</div>
<div class="t pp" style="left:55px;top:422.2px;font-size:4.55px;color:#4a4a4a">English (United States)</div>
<div class="t pp" style="left:112.5px;top:422.2px;font-size:4.55px;color:#4a4a4a">Accessibility: Investigate</div>
<div class="t pp" style="left:332px;top:422.2px;font-size:4.55px;color:#4a4a4a">Downloading missing fonts...</div>
<div class="t pp" style="left:442px;top:422.2px;font-size:4.55px;color:#4a4a4a">Notes</div>
<div class="t pp" style="left:470px;top:422.2px;font-size:4.55px;color:#4a4a4a">Comments</div>
<div class="t pp" style="left:626.4px;top:422.2px;font-size:4.55px;color:#4a4a4a">65%</div>
<div class="a ic" style="left:42px;top:421.5px;width:5px;height:5px"></div>
<div class="a ic" style="left:105px;top:421.5px;width:5px;height:5px;border-radius:3px"></div>
<div class="a" style="left:320px;top:422.5px;width:5px;height:3.5px;background:#555"></div>
<div class="a" style="left:390.7px;top:422px;width:37px;height:4.5px;background:#6e6e6e"></div>
<div class="a" style="left:436px;top:422.5px;width:4px;height:3.5px;border:1px solid #777;border-top:none"></div>
<div class="a" style="left:463px;top:422px;width:6px;height:4px;background:#555;border-radius:1px"></div>
<div class="a" style="left:499.5px;top:420px;width:14.5px;height:9px;background:#d2d2d2"></div>
<div class="a ic" style="left:503.5px;top:422px;width:7px;height:5px"></div>
<div class="a ic" style="left:521px;top:422px;width:6px;height:5px;opacity:.5"></div>
<div class="a ic" style="left:538px;top:422px;width:5px;height:5px;opacity:.6"></div>
<div class="a" style="left:554.5px;top:422px;width:7px;height:1px;background:#999;box-shadow:0 2px 0 #999,0 4px 0 #bbb"></div>
<div class="a" style="left:568px;top:424.3px;width:3px;height:1px;background:#777"></div>
<div class="a" style="left:574px;top:424.3px;width:42px;height:1px;background:#8a8a8a"></div>
<div class="a" style="left:591px;top:421.5px;width:1.5px;height:6.5px;background:#555"></div>
<div class="t pp" style="left:618px;top:421.5px;font-size:6px;color:#777">+</div>
<div class="a ic" style="left:641px;top:421.5px;width:5px;height:5px;opacity:.5"></div>
<div class="a" style="left:3px;top:428.2px;width:645.5px;height:19.6px;background:linear-gradient(90deg,#d3e3f4 0%,#dfe3f2 22%,#ecdfea 34%,#f4e4e6 50%,#f0dfe8 62%,#e2e2f0 74%,#d5e8f6 90%,#d2e7f6 100%)"></div>
<div id="w11">
<div class="a" style="left:13.5px;top:433px;width:6px;height:6px;border-radius:3px;background:#f2c04a;filter:blur(.4px)"></div>
<div class="a" style="left:12.2px;top:437px;width:11px;height:6.5px;border-radius:3.5px;background:linear-gradient(#f4f7fb,#a9c2e6);filter:blur(.3px)"></div>
<div class="t " style="left:25.7px;top:432.8px;font-size:5.4px;color:#333;filter:blur(.25px)">17°C</div>
<div class="t " style="left:25.7px;top:440px;font-size:5px;color:#777;filter:blur(.3px)">Mostly cloudy</div>
<div class="a" style="left:210.3px;top:434px;width:9.4px;height:9.4px;background:#1a84e0;filter:blur(.3px)"></div><div class="a" style="left:214.6px;top:434px;width:.8px;height:9.4px;background:#d8e8f6"></div><div class="a" style="left:210.3px;top:438.3px;width:9.4px;height:.8px;background:#d8e8f6"></div>
<svg class="a" style="left:228px;top:433.5px;filter:blur(.25px)" width="10" height="10"><circle cx="5.6" cy="4.2" r="3" stroke="#222" stroke-width="1.2" fill="none"/><path d="M3.6 6.4L1 9.2" stroke="#222" stroke-width="1.3"/></svg>
<div class="a" style="left:247px;top:434.5px;width:7px;height:6px;background:#f4f4f4;border:1px solid #bbb"></div><div class="a" style="left:247px;top:437.5px;width:6px;height:5px;background:#222"></div>
<div class="a" style="left:265.8px;top:434px;width:9.4px;height:9px;border-radius:5px;background:#6b63d6;filter:blur(.3px)"></div><div class="a" style="left:268.3px;top:436.3px;width:5px;height:3.6px;border-radius:1.5px;background:#eceafc"></div>
<div class="a" style="left:283.5px;top:434.2px;width:10px;height:8.5px;background:#f3c23e;border-radius:1px;filter:blur(.3px)"></div><div class="a" style="left:283.5px;top:436.5px;width:10px;height:2px;background:#fbe08a"></div>
<div class="a" style="left:287px;top:445px;width:3px;height:1px;background:#8a8a8a"></div>
<div class="a" style="left:302.7px;top:433.8px;width:9.8px;height:9.8px;border-radius:5px;background:conic-gradient(from 200deg,#1b7fd0,#35c0cf 30%,#63d48a 45%,#1e77c8 70%,#1b7fd0);filter:blur(.3px)"></div><div class="a" style="left:306px;top:436.5px;width:5px;height:3.5px;border-radius:3px;background:#e8eef6"></div>
<div class="a" style="left:306px;top:445px;width:3px;height:1px;background:#8a8a8a"></div>
<div class="a" style="left:321px;top:435.6px;width:10px;height:7px;background:#2a8fe0;filter:blur(.3px)"></div><svg class="a" style="left:321px;top:433px" width="10" height="8"><path d="M0 3L5 0L10 3Z" fill="#1a6fbe"/><path d="M1 3.6L5 6.4L9 3.6Z" fill="#e9f4fc"/></svg>
<div class="a" style="left:339.5px;top:434px;width:9.6px;height:9.2px;border-radius:1.5px;background:linear-gradient(135deg,#3b4fd6,#6a3fc4);filter:blur(.3px)"></div><svg class="a" style="left:341px;top:435.5px" width="7" height="7"><path d="M1 6L3 1L4 4L6 1" stroke="#e6e6ff" stroke-width="1" fill="none"/></svg>
<div class="a" style="left:357.8px;top:433.8px;width:9.8px;height:9.8px;border-radius:5px;background:radial-gradient(circle at 55% 45%,#8a3fd0 0 25%,#f2562a 45%,#f9a01e 90%);filter:blur(.3px)"></div>
<div class="a" style="left:376px;top:433.6px;width:10px;height:10px;border-radius:5px;background:#d5482a;filter:blur(.3px)"></div><div class="a" style="left:378.6px;top:436px;width:4.6px;height:5px;background:#f6d9cf;border-radius:1px;opacity:.85"></div>
<div class="a" style="left:378px;top:445px;width:6px;height:1.4px;background:#d0463a"></div>
<div class="a" style="left:397px;top:434px;width:7.5px;height:9.4px;background:#e9effa;border:1px solid #9ab0d6"></div><div class="a" style="left:394.5px;top:435.3px;width:6.4px;height:7px;background:#2b5fb4;filter:blur(.2px)"></div>
<div class="a" style="left:398px;top:445px;width:3px;height:1px;background:#8a8a8a"></div>
<div class="a" style="left:412.5px;top:433.8px;width:9.8px;height:9.8px;border-radius:5px;background:conic-gradient(from 120deg,#2a9fd8,#54d0b0 35%,#2a8fd0 70%,#2a9fd8);filter:blur(.3px)"></div><div class="a" style="left:415.3px;top:436.4px;width:4.4px;height:4.4px;border-radius:3px;background:#e4f2f6"></div>
<div class="a" style="left:416px;top:445px;width:3px;height:1px;background:#8a8a8a"></div>
<div class="a" style="left:432.5px;top:434px;width:9.4px;height:9.4px;background:#114d36;border-radius:1px;filter:blur(.25px)"></div><div class="a" style="left:435px;top:436.5px;width:4.4px;height:4.4px;border:1px solid #9fd2b8"></div>
<div class="a" style="left:434.5px;top:445px;width:5px;height:1.4px;background:#b0463a"></div>
<svg class="a" style="left:515.5px;top:436px;filter:blur(.25px)" width="7" height="5"><path d="M.8 4L3.5 1.2L6.2 4" stroke="#444" stroke-width=".9" fill="none"/></svg>
<div class="a" style="left:526px;top:435.5px;width:6.5px;height:5.5px;border-radius:3px 3px 1px 1px;background:#5a5a5a;filter:blur(.3px)"></div>
<div class="a" style="left:538px;top:435.5px;width:7px;height:5.5px;border:1px solid #555;filter:blur(.3px)"></div>
<div class="a" style="left:552.5px;top:434.5px;width:3px;height:5.5px;border-radius:1.5px;background:#d0524a;filter:blur(.3px)"></div><div class="a" style="left:553.6px;top:440px;width:.9px;height:2.4px;background:#c0605a"></div>
<div class="t " style="left:566px;top:435.5px;font-size:4.8px;color:#333;filter:blur(.25px)">ENG</div>
<div class="a" style="left:582.5px;top:435px;width:7px;height:5.4px;border:1px solid #444;filter:blur(.3px)"></div><div class="a" style="left:584.5px;top:441px;width:3px;height:1px;background:#444"></div>
<svg class="a" style="left:592.5px;top:435px;filter:blur(.25px)" width="7" height="7"><path d="M.6 2.4H2L4 .8V6.2L2 4.6H.6Z" fill="#444"/><path d="M5 2Q6 3.5 5 5" stroke="#444" stroke-width=".7" fill="none"/></svg>
<div class="a" style="left:602.5px;top:436px;width:6.5px;height:4.2px;border:1px solid #333;background:linear-gradient(90deg,#333 60%,transparent 60%);border-radius:1px;filter:blur(.25px)"></div>
<div class="t " style="left:621.7px;top:433.3px;font-size:4.9px;color:#333;filter:blur(.25px)">6:34 PM</div>
<div class="t " style="left:616.7px;top:439.7px;font-size:4.7px;color:#333;filter:blur(.25px)">11/20/2022</div>
</div>
</div>
</div>
</div>

<!-- ===== right pods ===== -->
<div id="rightpods">
<div class="a" style="left:648.5px;top:41px;width:1px;height:436px;background:#1f1f1f"></div>
<div class="a podhead" style="left:649.5px;top:41px;width:197.5px;height:19.5px"></div>
<div class="t " style="left:649px;top:45px;font-size:9.5px;color:#333;font-weight:bold">o</div>
<div class="a" style="left:755.5px;top:43.5px;width:16px;height:14.5px;background:#b9b9b9;border:1px solid #8f8f8f"></div>
<div class="a" style="left:757.5px;top:45.5px;width:3.4px;height:2.8px;background:#6f6f6f"></div><div class="a" style="left:761.8px;top:45.5px;width:3.4px;height:2.8px;background:#6f6f6f"></div><div class="a" style="left:766.1px;top:45.5px;width:3.4px;height:2.8px;background:#6f6f6f"></div><div class="a" style="left:757.5px;top:49.2px;width:3.4px;height:2.8px;background:#6f6f6f"></div><div class="a" style="left:761.8px;top:49.2px;width:3.4px;height:2.8px;background:#6f6f6f"></div><div class="a" style="left:766.1px;top:49.2px;width:3.4px;height:2.8px;background:#6f6f6f"></div><div class="a" style="left:757.5px;top:52.9px;width:3.4px;height:2.8px;background:#6f6f6f"></div><div class="a" style="left:761.8px;top:52.9px;width:3.4px;height:2.8px;background:#6f6f6f"></div><div class="a" style="left:766.1px;top:52.9px;width:3.4px;height:2.8px;background:#6f6f6f"></div>
<div class="a" style="left:772px;top:43.5px;width:15.5px;height:14.5px;background:#efefef;border:1px solid #9a9a9a"></div>
<div class="a" style="left:774.5px;top:45.5px;width:10.5px;height:6px;background:#5a5a5a"></div>
<div class="a" style="left:774.5px;top:53px;width:2.9px;height:2.4px;background:#5a5a5a"></div>
<div class="a" style="left:778.3px;top:53px;width:2.9px;height:2.4px;background:#5a5a5a"></div>
<div class="a" style="left:782.1px;top:53px;width:2.9px;height:2.4px;background:#5a5a5a"></div>
<svg class="a" style="left:794.5px;top:45px" width="11" height="11" viewBox="0 0 11 11"><path d="M.6 .6H4L.6 4ZM10.4 .6V4L7 .6ZM.6 10.4V7L4 10.4ZM10.4 10.4H7L10.4 7Z" fill="#3a3a3a"/><path d="M1.5 1.5L4.2 4.2M9.5 1.5L6.8 4.2M1.5 9.5L4.2 6.8M9.5 9.5L6.8 6.8" stroke="#3a3a3a" stroke-width="1.3"/></svg>
<div class="a" style="left:812px;top:44px;width:1px;height:14px;background:#9a9a9a"></div>
<div class="a" style="left:828px;top:48px;width:6px;height:5px;border-top:1px solid #8c8c8c;border-bottom:1px solid #8c8c8c"></div>
<div class="a" style="left:828px;top:50px;width:6px;height:1px;background:#8c8c8c"></div>
<div class="a arr" style="left:835.5px;top:50px;border-top-color:#7c7c7c;border-left-width:2px;border-right-width:2px;border-top-width:2.5px"></div>
<div class="a" style="left:649.5px;top:60.5px;width:197.5px;height:113.8px;background:#8e8e8e;border-top:1px solid #7a7a7a"></div>
<div class="a" style="left:649.5px;top:61px;width:197.5px;height:113.5px;background:repeating-linear-gradient(135deg,rgba(255,255,255,.025) 0 1px,rgba(0,0,0,.02) 1px 3px)"></div>
<div class="a" style="left:690px;top:108.5px;width:93px;height:18.5px;border-radius:2.5px;background:linear-gradient(#3a3a3a,#1a1a1a 60%,#111);box-shadow:0 1px 3px rgba(0,0,0,.55)"></div>
<div class="t " style="left:699px;top:114px;font-size:8px;font-weight:bold;color:#f2f2f2;letter-spacing:.62px">Start My Webcam</div>
<div class="a podhead" style="left:649.5px;top:174.2px;width:197.5px;height:21px;border-top:1px solid #6a6a6a"></div>
<div class="t " style="left:649px;top:180.5px;font-size:8.8px;font-weight:bold;color:#444;letter-spacing:-.5px">ndees</div>
<div class="t " style="left:676px;top:181.5px;font-size:7.6px;font-weight:bold;color:#3a3a3a">(71)</div>
<div class="a" style="left:828px;top:183px;width:5px;height:4px;border-top:1px solid #c2c2c2;border-bottom:1px solid #c2c2c2"></div>
<div class="a arr" style="left:834.5px;top:184.5px;border-top-color:#c2c2c2;border-left-width:1.8px;border-right-width:1.8px;border-top-width:2.2px"></div>
<div class="a" style="left:649.5px;top:195.2px;width:197.5px;height:20.6px;background:#dfdfdf;border-top:1px solid #bdbdbd;border-bottom:1px solid #b0b0b0"></div>
<div class="a" style="left:649.5px;top:198.5px;width:13px;height:14.5px;border:1px solid #c9c9c9;border-left:none;background:#e9e9e9"></div>
<svg class="a" style="left:651px;top:201px" width="10" height="10" viewBox="0 0 11 11"><path d="M1.5 1.5L4.2 4.2M9.5 1.5L6.8 4.2M1.5 9.5L4.2 6.8M9.5 9.5L6.8 6.8M1 1H3.5M1 1V3.5M10 1H7.5M10 1V3.5M1 10H3.5M1 10V7.5M10 10H7.5M10 10V7.5" stroke="#c4c4c4" stroke-width="1.2" fill="none"/></svg>
<div class="a" style="left:664px;top:198.5px;width:15.5px;height:14.5px;border:1px solid #c9c9c9;background:#e9e9e9"></div>
<svg class="a" style="left:666px;top:200.5px" width="12" height="11"><circle cx="3.6" cy="2.8" r="1.9" fill="#c4c4c4"/><path d="M.6 8.6Q.8 5.2 3.6 5.2Q6.4 5.2 6.6 8.6Z" fill="#c4c4c4"/><path d="M7.6 4.5H11M7.6 6.5H11M7.6 8.5H11" stroke="#c9c9c9" stroke-width=".9"/></svg>
<div class="a" style="left:649.5px;top:216px;width:197.5px;height:136.5px;background:#fff"></div>
<div class="a ghead" style="top:216px;height:14.8px"></div>
<div class="t " style="left:649px;top:220px;font-size:8px;font-weight:bold;color:#444;letter-spacing:-.25px">sts (3)</div>
<div class="a row" style="top:230.8px;background:#fff;border-bottom:1px solid #e9e9e9"></div>
<div class="t " style="left:649px;top:237.6px;font-size:4.8px;font-weight:bold;color:#333;direction:rtl">... د استا</div>
<div class="a row" style="top:245.6px;background:#f6f6f6;border-bottom:1px solid #e9e9e9"></div>
<div class="t " style="left:649px;top:250px;font-size:5.5px;font-weight:bold;color:#111;direction:rtl">قم استان 2</div>
<svg class="a" style="left:823px;top:247px" width="9" height="11" viewBox="0 0 9 11"><rect x="3" y=".6" width="3" height="6" rx="1.5" fill="#a9a9a9" stroke="#777" stroke-width=".4"/><path d="M1.6 5Q1.6 8 4.5 8Q7.4 8 7.4 5M4.5 8V9.8M2.6 10.2H6.4" stroke="#888" stroke-width=".8" fill="none"/><path d="M1.2 9.6L7.8 .8" stroke="#d0261e" stroke-width="1.7"/></svg>
<div class="a row" style="top:260.5px;height:13.8px;background:#fff"></div>
<div class="t " style="left:649px;top:264.3px;font-size:6px;font-weight:bold;color:#111;direction:rtl">زمحمد زمهد</div>
<div class="a ghead" style="top:274.2px;height:14px;border-top:1px solid #c9c9c9"></div>
<div class="t " style="left:649px;top:278px;font-size:8px;color:#a4a4a4;letter-spacing:-.4px">esenters (0)</div>
<div class="a ghead" style="top:288.2px;height:14.6px"></div>
<div class="t " style="left:649px;top:292px;font-size:8px;font-weight:bold;color:#444;letter-spacing:-.4px">rticipants (68)</div>
<div class="a row" style="top:302.8px;background:#fff;border-bottom:1px solid #e6e6e6"></div>
<div class="t rt" style="left:649.5px;top:306.5px;color:#3f86c9">40111215424</div>
<div class="a row" style="top:317.6px;background:#f6f6f6;border-bottom:1px solid #e6e6e6"></div>
<div class="t rt" style="left:649.5px;top:321.5px;color:#2b2b2b;font-size:6.9px;letter-spacing:-.3px">Ahmad. Ghodsi</div>
<div class="a row" style="top:332.6px;background:#fff;border-bottom:1px solid #e6e6e6"></div>
<div class="t rt" style="left:649.5px;top:336.5px;color:#3f86c9;font-size:7px;letter-spacing:-.15px">Ali Asghar Feizipour (Samdaliri)</div>
<div class="a row" style="top:347.4px;height:5px;background:#f4f4f4"></div>
<div class="a" style="left:655px;top:350.5px;width:30px;height:2px;background:#c9c9c9;filter:blur(.5px)"></div>
<div class="a" style="left:838px;top:216px;width:9px;height:136.5px;background:#bcbcbc;border-left:1px solid #a9a9a9"></div>
<div class="a" style="left:838px;top:216.5px;width:9px;height:14px;background:#fdfdfd;border:1px solid #a9a9a9"></div>
<div class="a" style="left:841.8px;top:221px;width:1.4px;height:4px;background:#555"></div>
<div class="a" style="left:649.5px;top:352.4px;width:197.5px;height:1.2px;background:#4f4f4f"></div>
<div class="a podhead" style="left:649.5px;top:353.6px;width:197.5px;height:20.4px;border-bottom:1px solid #b9b9b9"></div>
<div class="t " style="left:653.7px;top:360px;font-size:7px;font-weight:bold;color:#5a5a5a;letter-spacing:-.2px">(Everyone)</div>
<div class="a" style="left:829px;top:361px;width:5px;height:4px;border-top:1px solid #c2c2c2;border-bottom:1px solid #c2c2c2"></div>
<div class="a arr" style="left:835.5px;top:362.5px;border-top-color:#c2c2c2;border-left-width:1.8px;border-right-width:1.8px;border-top-width:2.2px"></div>
<div class="a" style="left:649.5px;top:374px;width:197.5px;height:66px;background:#f1f1f1"></div>
<div class="a" style="left:838.6px;top:374px;width:8.4px;height:62px;background:#c4c4c4;border-left:1px solid #b0b0b0"></div>
<div class="a" style="left:838.6px;top:432px;width:8.4px;height:7px;background:#f4f4f4;border:1px solid #a9a9a9"></div>
<div class="t " style="left:649px;top:384px;font-size:7.6px;font-weight:bold;color:#222">rezaee:</div>
<div class="t " style="left:678.5px;top:384.5px;font-size:5.5px;font-weight:bold;color:#3a3a3a;direction:rtl">وبت الله خاقانی‌س أویرة</div>
<div class="t " style="left:649px;top:399px;font-size:7.6px;font-weight:bold;color:#111;direction:rtl">ي‍ـ‍ـ: -</div>
<div class="t " style="left:649px;top:413px;font-size:6.2px;font-weight:bold;color:#2a2a2a;direction:rtl">سلام :ي‍ف‍رب‍ا</div>
<div class="a" style="left:649.5px;top:440px;width:197.5px;height:20px;background:#e9e9e9;border-top:1px solid #c4c4c4"></div>
<div class="a" style="left:644px;top:443.3px;width:176.5px;height:15.2px;background:#fff;border:1px solid #a9a9a9;border-radius:3px;clip-path:inset(0 0 0 5.5px)"></div>
<div class="a" style="left:823.5px;top:443.5px;width:18.7px;height:14.8px;background:linear-gradient(#f4f4f4,#dadada);border:1px solid #a6a6a6;border-radius:2.5px"></div>
<svg class="a" style="left:827px;top:446px" width="12" height="10"><ellipse cx="6" cy="4" rx="4.6" ry="3.2" fill="#9a9a9a" stroke="#6f6f6f" stroke-width=".8"/><path d="M3 6.2L2 9L5 7" fill="#9a9a9a" stroke="#6f6f6f" stroke-width=".6"/></svg>
<div class="a" style="left:649.5px;top:460px;width:197.5px;height:16.8px;background:repeating-linear-gradient(135deg,#e6e6e6 0 1.5px,#dedede 1.5px 3px);border-top:1px solid #bdbdbd"></div>
<div class="a" style="left:649.5px;top:461.5px;width:16px;height:15.3px;background:linear-gradient(#f4f4f4,#dedede);border-right:1px solid #a9a9a9"></div>
<div class="t " style="left:649.5px;top:465.5px;font-size:7.4px;color:#333;letter-spacing:-.3px">one</div>
<div class="a" style="left:666.6px;top:461.5px;width:45.8px;height:15.3px;background:linear-gradient(#ecd283,#d9b258 55%,#c9a04a);border:1px solid #b4914a;border-bottom:none"></div>
<div class="t " style="left:671px;top:465.3px;font-size:7.4px;font-weight:bold;color:#3a3220;letter-spacing:-.25px">Presenters</div>
</div>

<!-- ===== sidebar ===== -->
<div id="sidebar">
<div class="a" style="left:847px;top:37px;width:5px;height:441px;background:#2a2a2a"></div>
<div class="a" style="left:851.7px;top:37px;width:48.3px;height:441px;background:#363636"></div>
<div class="a" style="left:851.7px;top:37.5px;width:48.3px;height:8px;background:#262626"></div>
<div class="a" style="left:855px;top:39.5px;width:5px;height:3.4px;border-top:1px solid #8f8f8f;border-bottom:1px solid #8f8f8f"></div>
<div class="a arr" style="left:861.5px;top:41px;border-top-color:#999;border-left-width:1.3px;border-right-width:1.3px;border-top-width:1.8px"></div>
<svg class="a" style="left:891px;top:39px" width="5" height="5"><path d="M.5 .5L4.5 4.5M4.5 .5L.5 4.5" stroke="#ccc" stroke-width="1"/></svg>
<div class="a" style="left:857.8px;top:54.4px;width:35.8px;height:24.5px;background:#b7b7b7;border:1px solid #5a5a5a;box-shadow:inset 0 0 0 1px #8f8f8f"></div>
<div class="a" style="left:858.8px;top:55.4px;width:33.8px;height:2.6px;background:#7d7d7d"></div>
<div class="t " style="left:858.4px;top:84.8px;font-size:8px;color:#dcdcdc;letter-spacing:-.2px">Sharing</div>
<div class="a" style="left:855px;top:100.4px;width:39.6px;height:28.8px;background:#6b9ad0;border:1.5px solid #3d8bea;box-shadow:inset 0 0 0 1px #2f5f9e"></div>
<div class="a" style="left:857.5px;top:103px;width:26px;height:23.5px;background:#6f9dd3;border:1px solid #5686c2"></div>
<div class="a" style="left:884.5px;top:103px;width:8px;height:7.4px;background:#6f9dd3;border:1px solid #5686c2"></div>
<div class="a" style="left:884.5px;top:111px;width:8px;height:7.4px;background:#6f9dd3;border:1px solid #5686c2"></div>
<div class="a" style="left:884.5px;top:119px;width:8px;height:7.4px;background:#6f9dd3;border:1px solid #5686c2"></div>
<div class="t " style="left:858px;top:133px;font-size:8px;color:#dcdcdc;letter-spacing:-.15px">Discussion</div>
<div class="a" style="left:857.8px;top:151.7px;width:35.8px;height:22.6px;background:#555;border:1px solid #4a4a4a"></div>
<div class="a" style="left:858.8px;top:152.7px;width:25px;height:14px;background:#b4b4b4"></div>
<div class="a" style="left:885px;top:152.7px;width:7.6px;height:6.2px;background:#a9a9a9"></div>
<div class="a" style="left:885px;top:159.89999999999998px;width:7.6px;height:6.2px;background:#a9a9a9"></div>
<div class="a" style="left:885px;top:167.1px;width:7.6px;height:6.2px;background:#a9a9a9"></div>
<div class="a" style="left:858.8px;top:168px;width:7.6px;height:5.3px;background:#a9a9a9"></div>
<div class="a" style="left:867.4px;top:168px;width:7.6px;height:5.3px;background:#a9a9a9"></div>
<div class="a" style="left:876.0px;top:168px;width:7.6px;height:5.3px;background:#a9a9a9"></div>
<div class="t " style="left:858.4px;top:181px;font-size:8px;color:#dcdcdc;letter-spacing:-.2px">Collabo...</div>
<svg class="a" style="left:858px;top:456px" width="12.5" height="12" viewBox="0 0 12.5 12"><path d="M2 1.6L10.6 10.4" stroke="#c2c2c2" stroke-width="1.9" stroke-linecap="round"/><path d="M10.4 1.4L2.2 10.2" stroke="#c2c2c2" stroke-width="1.6"/><circle cx="2.3" cy="1.9" r="1.9" fill="#c2c2c2"/><circle cx="1.7" cy="1.2" r="1" fill="#363636"/><path d="M9.2 .6L11.8 .4L11.6 3Z" fill="#c2c2c2"/><circle cx="10.4" cy="10.2" r="1.3" fill="#c2c2c2"/></svg>
<svg class="a" style="left:881.5px;top:456.3px" width="11.5" height="11"><path d="M5.7 .5V10.5M.5 5.5H11" stroke="#c6c6c6" stroke-width="1.8"/></svg>
</div>

<!-- ===== taskbar ===== -->
<div id="taskbar">
<div class="a" style="left:0;top:477px;width:900px;height:2px;background:#3a3a3a"></div>
<div class="a" style="left:0;top:478.5px;width:900px;height:27.5px;background:linear-gradient(90deg,#dcefe9 0%,#d9efe8 60%,#daefe8 81.5%,#ebebe6 85.5%,#f0e8e6 90.5%,#e6ebe6 93%,#daefe8 95.5%,#d9efe9 100%)"></div>
<svg class="a" style="left:10.5px;top:488px" width="11" height="10" viewBox="0 0 11 10"><path d="M0 1.4L4.6 .8V4.7H0ZM5.3 .7L11 0V4.7H5.3ZM0 5.3H4.6V9.2L0 8.6ZM5.3 5.3H11V10L5.3 9.3Z" fill="#111"/></svg>
<div class="a" style="left:32.6px;top:480px;width:224.5px;height:26px;background:#fdfdfd;border:1px solid #e9f1ee"></div>
<svg class="a" style="left:40px;top:487.5px" width="11" height="11" viewBox="0 0 11 11"><circle cx="6.4" cy="4.2" r="3.2" stroke="#333" stroke-width="1" fill="none"/><path d="M4.2 6.6L.8 10.2" stroke="#333" stroke-width="1.1"/></svg>
<div class="t " style="left:58.6px;top:488px;font-size:9.6px;color:#3a3a3a;letter-spacing:-.1px">Type here to search</div>
<div class="a" style="left:268.8px;top:487.6px;width:10.5px;height:10.5px;border:1.6px solid #222;border-radius:6px"></div>
<div class="a" style="left:299px;top:488.5px;width:8px;height:9px;border:1.2px solid #333;border-left:none;border-right:none"></div><div class="a" style="left:300.5px;top:490.5px;width:5px;height:5px;border:1.2px solid #333"></div>
<div class="a" style="left:308.6px;top:488.5px;width:1.3px;height:3px;background:#333"></div><div class="a" style="left:308.6px;top:494.5px;width:1.3px;height:3px;background:#333"></div>
<div class="a" style="left:337px;top:486px;width:10px;height:13.5px;background:#f2f5fa;border:1px solid #9db2d3"></div>
<div class="a" style="left:342px;top:489px;width:4px;height:1px;background:#6f8fc0;box-shadow:0 2px 0 #6f8fc0,0 4px 0 #6f8fc0,0 6px 0 #6f8fc0"></div>
<div class="a" style="left:331.8px;top:487.2px;width:9.5px;height:11px;background:#2b579a"></div>
<div class="t " style="left:333px;top:489.2px;font-size:7px;font-weight:bold;color:#fff">W</div>
<div class="a" style="left:363.2px;top:485px;width:16.4px;height:16.4px;border-radius:9px;background:conic-gradient(from 200deg,#1b7fd0,#2fb6d8 25%,#5fd38a 45%,#2fb6d8 60%,#1668b8 80%,#1b7fd0)"></div>
<div class="a" style="left:368.6px;top:489px;width:9px;height:7px;border-radius:5px 5px 5px 1px;background:#dcefe9"></div>
<div class="a" style="left:369.5px;top:492.5px;width:6px;height:6px;border-radius:4px;background:#1565b5"></div>
<div class="a" style="left:395.3px;top:489px;width:17px;height:11px;background:#1e88d8;border-radius:1px"></div>
<svg class="a" style="left:395.3px;top:484.5px" width="17" height="16"><path d="M0 5L8.5 0L17 5Z" fill="#1673c2"/><path d="M1.5 6.2L8.5 11L15.5 6.2V5H1.5Z" fill="#e9f4fc"/><path d="M0 5L8.5 11.4L17 5V6.6L8.5 13L0 6.6Z" fill="#54b0ee"/></svg>
<div class="a" style="left:427.5px;top:484.8px;width:16.6px;height:16.6px;border-radius:9px;background:conic-gradient(from -30deg,#e33b2e 0 120deg,#f6c11a 120deg 240deg,#2ba24c 240deg 360deg)"></div>
<div class="a" style="left:432.2px;top:489.5px;width:7.2px;height:7.2px;border-radius:4px;background:#4a8af4;border:1.2px solid #f2f2f2"></div>
<div class="a" style="left:436.5px;top:493.5px;width:9px;height:9px;border-radius:5px;background:#8d2f5a;border:1px solid #dcefe9"></div>
<div class="a" style="left:423px;top:504.3px;width:23.5px;height:1.7px;background:#a04a78"></div>
<div class="a" style="left:460.5px;top:486.5px;width:15px;height:12.5px;background:#f6c544;border-radius:1px"></div>
<div class="a" style="left:460.5px;top:485px;width:6.5px;height:3px;background:#e9ae2a;border-radius:1px 1px 0 0"></div>
<div class="a" style="left:460.5px;top:489.5px;width:15px;height:3.2px;background:#fbdc7e"></div>
<div class="a" style="left:464.5px;top:495px;width:7px;height:4px;background:#4a9bd8"></div>
<div class="a" style="left:494px;top:486px;width:14px;height:14px;border-radius:8px;background:#46b8ea;border:1px solid #8fd4f2"></div>
<div class="t " style="left:497px;top:486.2px;font-size:13px;font-weight:bold;color:#eafaff;font-style:italic">e</div>
<div class="a" style="left:491.5px;top:489px;width:19px;height:6px;border:1.3px solid #e9c23a;border-radius:50%;transform:rotate(-28deg);border-bottom-color:transparent"></div>
<div class="a" style="left:525px;top:485px;width:16.4px;height:16.4px;border-radius:4.5px;background:#f0902a"></div>
<div class="t " style="left:528.3px;top:484.5px;font-size:14px;font-weight:bold;color:#fff6e8;font-style:italic">e</div>
<div class="a" style="left:549px;top:478.5px;width:33px;height:27.5px;background:#eef7f4"></div>
<div class="a" style="left:549px;top:504.3px;width:33px;height:1.7px;background:#8a3f78"></div>
<div class="a" style="left:558.8px;top:485.7px;width:13.6px;height:13.4px;background:#0f4d36;border-radius:1px"></div>
<div class="a" style="left:562px;top:489px;width:7.2px;height:7px;border:1.2px solid #a6d6bd"></div>
<svg class="a" style="left:562px;top:489px" width="8" height="8"><path d="M1.5 1.5L6.5 6.5M6.5 1.5L1.5 6.5" stroke="#bfe6d0" stroke-width="1"/></svg>
<div class="a" style="left:678.6px;top:484.6px;width:7px;height:7px;border-radius:4px;background:#f2b234"></div>
<div class="a" style="left:674.6px;top:490.6px;width:16.2px;height:9px;border-radius:4.5px;background:linear-gradient(#f2f6fb,#b4c6e2)"></div>
<div class="a" style="left:680.5px;top:488.2px;width:8px;height:7px;border-radius:4px;background:#eef3fa"></div>
<div class="t tb" style="left:695.8px;top:488.5px;letter-spacing:-.15px">59°F</div>
<div class="t tb" style="left:720px;top:488.5px;letter-spacing:-.1px">Haze</div>
<svg class="a" style="left:757.5px;top:489.5px" width="10" height="7"><path d="M1 5.6L5 1.4L9 5.6" stroke="#222" stroke-width="1.1" fill="none"/></svg>
<div class="a" style="left:780.7px;top:489px;width:10.3px;height:8px;border:1.1px solid #222"></div><div class="a" style="left:781px;top:492.8px;width:10px;height:1px;background:#222"></div><div class="a" style="left:785.5px;top:493px;width:1px;height:4px;background:#222"></div>
<div class="t " style="left:808px;top:490px;font-size:6px;font-weight:bold;color:#222">فا</div>
<div class="t tb" style="left:830.5px;top:483.3px;font-size:8px;letter-spacing:-.25px">6:32 PM</div>
<div class="t tb" style="left:825px;top:495px;font-size:8px;letter-spacing:-.3px">11/20/2022</div>
<svg class="a" style="left:872.5px;top:487.3px" width="11" height="11.5" viewBox="0 0 11 11.5"><path d="M.4 .4H10.6V8.4H6.8L4.4 11V8.4H.4Z" fill="#111"/><path d="M2.4 2.8H8.6M2.4 4.6H8.6M2.4 6.4H6.4" stroke="#ece9e6" stroke-width=".7"/></svg>
</div>

</div>
</body>
</html>
